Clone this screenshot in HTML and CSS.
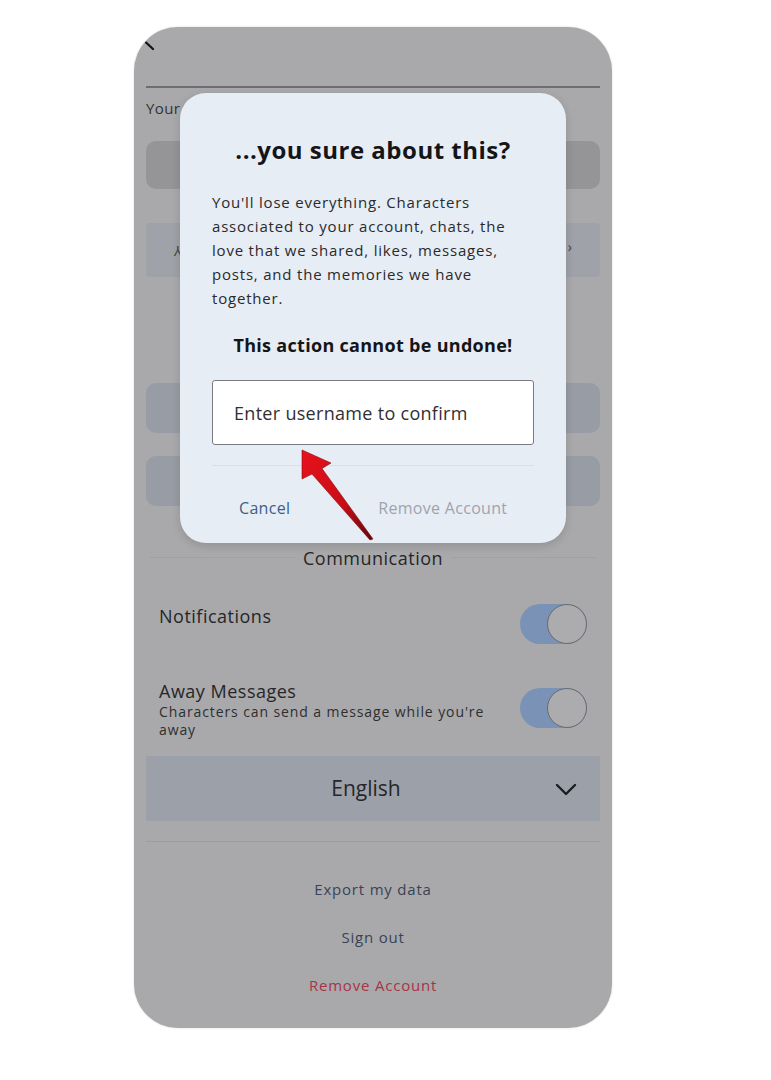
FILE: index.html
```html
<!DOCTYPE html>
<html lang="en">
<head>
<meta charset="utf-8">
<title>Remove account</title>
<link rel="stylesheet" href="styles.css">
</head>
<body>
<div class="phone">
  <div class="top">
    <svg class="back" width="10" height="10" viewBox="0 0 10 10"><line x1="1" y1="1.5" x2="8" y2="8" stroke="#111" stroke-width="2.2" stroke-linecap="round"/></svg>
  </div>
  <div class="rule"></div>
  <div class="label">Your username</div>
  <div class="card card-dark"></div>
  <div class="card card-blue card-tall"><span class="mark">⅄</span><span class="mark mark-r">›</span></div>
  <div class="card card-steel card-gap"></div>
  <div class="card card-steel card-next"></div>

  <div class="section">
    <span class="section-line"></span>
    <span class="section-title">Communication</span>
    <span class="section-line"></span>
  </div>

  <div class="row row-first">
    <div class="row-text"><div class="row-title">Notifications</div></div>
    <div class="toggle"><span class="knob"></span></div>
  </div>
  <div class="row row-top">
    <div class="row-text">
      <div class="row-title">Away Messages</div>
      <div class="row-sub">Characters can send a message while you're away</div>
    </div>
    <div class="toggle toggle-low"><span class="knob"></span></div>
  </div>

  <div class="select">
    <span class="select-text">English</span>
    <svg class="chevron" width="22" height="14" viewBox="0 0 22 14"><polyline points="2,2 11,11 20,2" fill="none" stroke="#1c1c1e" stroke-width="2.4" stroke-linecap="round" stroke-linejoin="round"/></svg>
  </div>
  <div class="rule rule-light"></div>

  <div class="links">
    <div class="link">Export my data</div>
    <div class="link">Sign out</div>
    <div class="link link-danger">Remove Account</div>
  </div>

  <div class="dialog">
    <h1 class="dialog-title">...you sure about this?</h1>
    <p class="dialog-body">You'll lose everything. Characters associated to your account, chats, the love that we shared, likes, messages, posts, and the memories we have together.</p>
    <p class="dialog-warn">This action cannot be undone!</p>
    <input class="dialog-input" type="text" placeholder="Enter username to confirm">
    <div class="dialog-rule"></div>
    <div class="dialog-actions">
      <span class="btn btn-cancel">Cancel</span>
      <span class="btn btn-remove">Remove Account</span>
    </div>
  </div>

  <svg class="arrow" width="100" height="100" viewBox="284 445 100 100">
    <defs>
      <linearGradient id="ag" x1="0" y1="0" x2="1" y2="1">
        <stop offset="0" stop-color="#e8121c"/>
        <stop offset="0.6" stop-color="#c80d16"/>
        <stop offset="1" stop-color="#5a0a0c"/>
      </linearGradient>
    </defs>
    <polygon points="302,450 331,463 322,468.5 373,539 370,540 312,474 302,479" fill="url(#ag)" stroke="#8a0a10" stroke-width="0.6" stroke-linejoin="round"/>
  </svg>
</div>
</body>
</html>
```

FILE: styles.css
```css
* { box-sizing: border-box; }
html, body { margin: 0; padding: 0; background: #ffffff; }
body {
  width: 771px;
  height: 1080px;
  font-family: "Open Sans", "Noto Sans", sans-serif;
  color: #262628;
  overflow: hidden;
}
.phone {
  position: relative;
  margin: 27px 0 0 134px;
  width: 478px;
  height: 1001px;
  border-radius: 44px;
  overflow: hidden;
  background: #a9a9ab;
  box-shadow: 0 0 2px rgba(0,0,0,0.18);
}
.top { height: 59px; padding: 14px 0 0 11px; }
.back { display: block; }
.rule { height: 1.5px; margin: 0 12px; background: #6e6e72; }
.rule-light { height: 1px; background: #9d9da0; margin-top: 20px; }
.label {
  margin-top: 10px;
  padding-left: 12px;
  font-size: 15px;
  line-height: 20px;
  color: #333;
  letter-spacing: 0.4px;
}
.card { margin: 0 12px; border-radius: 10px; position: relative; }
.card-dark { margin-top: 23px; height: 48px; background: #959597; }
.card-blue { margin-top: 34px; height: 54px; background: #9fa2a8; border-radius: 4px; }
.card-steel { height: 50px; background: #989ca4; }
.card-gap { margin-top: 106px; }
.card-next { margin-top: 23px; }
.mark { position: absolute; left: 28px; top: 18px; font-size: 14px; color: #444; }
.mark-r { left: auto; right: 28px; top: 14px; }

.section {
  margin-top: 41px;
  height: 22px;
  display: flex;
  align-items: center;
  padding: 0 16px;
  gap: 8px;
}
.section-line { flex: 1; height: 1px; background: #a0a0a3; }
.section-title { font-size: 18px; line-height: 22px; color: #262628; letter-spacing: 0.5px; }

.row { display: flex; justify-content: space-between; padding: 0 25px; }
.row-first { margin-top: 35px; align-items: flex-start; height: 40px; }
.row-first .row-text { margin-top: 1px; }
.row-top { margin-top: 36px; align-items: flex-start; }
.row-title { font-size: 18px; line-height: 22px; color: #262628; letter-spacing: 0.5px; }
.row-sub { font-size: 14px; line-height: 18px; color: #2e2e30; width: 345px; letter-spacing: 0.9px; margin-top: 1px; }
.toggle {
  position: relative;
  width: 67px;
  height: 40px;
  border-radius: 20px;
  background: #7a92b6;
  flex: none;
}
.toggle-low { margin-top: 8px; }
.knob {
  position: absolute;
  right: 0;
  top: 0;
  width: 40px;
  height: 40px;
  border-radius: 50%;
  background: #acacaf;
  border: 1.5px solid #6a6a6e;
}

.select {
  margin: 17px 12px 0;
  height: 65px;
  background: #9ca1a9;
  display: flex;
  align-items: center;
  justify-content: center;
  position: relative;
}
.select-text { font-size: 21px; color: #262628; margin-right: 14px; }
.chevron { position: absolute; right: 23px; top: 27px; }

.links { margin-top: 23px; text-align: center; }
.link { font-size: 15px; line-height: 48px; color: #3a4356; letter-spacing: 0.8px; }
.link-danger { color: #a63446; }

.dialog {
  position: absolute;
  left: 46px;
  top: 66px;
  width: 386px;
  height: 450px;
  border-radius: 26px;
  background: #e7edf5;
  box-shadow: 0 3px 10px rgba(0,0,0,0.14);
  padding: 42px 32px 0;
}
.dialog-title {
  margin: 0;
  font-size: 24px;
  line-height: 30px;
  font-weight: 700;
  text-align: center;
  color: #151517;
  letter-spacing: 0.5px;
}
.dialog-body {
  margin: 25px 22px 0 0;
  font-size: 15px;
  line-height: 24px;
  color: #2a2a2c;
  letter-spacing: 0.8px;
}
.dialog-warn {
  margin: 23px 0 0;
  font-size: 18px;
  line-height: 24px;
  font-weight: 700;
  text-align: center;
  color: #151517;
  letter-spacing: 0.3px;
}
.dialog-input {
  display: block;
  margin-top: 23px;
  width: 322px;
  height: 65px;
  border: 1px solid #7a7a80;
  border-radius: 3px;
  background: #ffffff;
  padding: 0 0 0 21px;
  font-family: "Open Sans", "Noto Sans", sans-serif;
  font-size: 18px;
  color: #222;
  outline: none;
  letter-spacing: 0.3px;
}
.dialog-input::placeholder { color: #303034; opacity: 1; }
.dialog-rule { margin-top: 20px; height: 1px; background: #d9dfe8; }
.dialog-actions {
  display: flex;
  padding: 30px 0 0 27px;
  font-size: 16px;
  line-height: 24px;
  letter-spacing: 0.3px;
}
.btn-cancel { color: #3d5f86; }
.btn-remove { color: #9fa3ad; margin-left: 88px; }

.arrow { position: absolute; left: 150px; top: 418px; }
```
